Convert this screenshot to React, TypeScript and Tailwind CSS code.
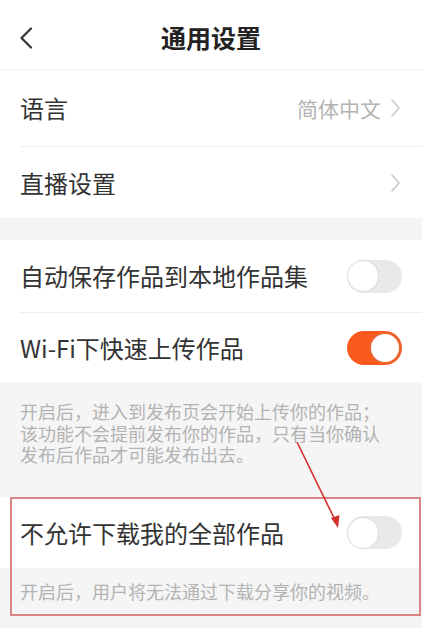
import React from "react"

const font = { fontFamily: '"Noto Sans CJK SC", "Noto Sans", sans-serif' }

function Chevron({ className = "" }: { className?: string }) {
  return (
    <svg width="9" height="18" viewBox="0 0 9 18" className={className}>
      <path d="M1 1 L8 9 L1 17" fill="none" stroke="#c4c4c4" strokeWidth="1.4" strokeLinecap="round" strokeLinejoin="round" />
    </svg>
  )
}

function Toggle({ on }: { on: boolean }) {
  return on ? (
    <div className="w-[55px] h-[34px] rounded-full bg-[#fb5a1f] flex items-center justify-end pr-[1px]">
      <div className="w-[32px] h-[32px] rounded-full bg-white border-2 border-[#e9672f]" />
    </div>
  ) : (
    <div className="w-[55px] h-[33px] rounded-full bg-[#e9e9e9] flex items-center">
      <div className="w-[32px] h-[32px] rounded-full bg-white border border-[#e2e2e2] shadow-[0_0_1px_rgba(0,0,0,0.08)]" />
    </div>
  )
}

export default function App() {
  return (
    <div className="w-[422px] h-[628px] overflow-hidden bg-[#f5f5f5] relative text-[#333]" style={font}>
      {/* header */}
      <div className="h-[70px] bg-white border-b border-[#f0f0f0] relative flex items-center justify-center">
        <svg width="14" height="22" viewBox="0 0 14 22" className="absolute left-[19px] top-[27px]">
          <path d="M12 1.5 L2.5 11 L12 20.5" fill="none" stroke="#333" strokeWidth="2.2" strokeLinecap="round" strokeLinejoin="round" />
        </svg>
        <h1 className="text-[25px] font-bold text-[#222] leading-none mt-[6px]">通用设置</h1>
      </div>

      {/* language / live */}
      <div className="bg-white">
        <div className="h-[76px] flex items-center justify-between pl-[20px] pr-[22px]">
          <span className="text-[24px] leading-none">语言</span>
          <div className="flex items-center gap-[10px]">
            <span className="text-[21px] leading-none text-[#b4b4b4]">简体中文</span>
            <Chevron />
          </div>
        </div>
        <div className="ml-[20px] h-px bg-[#efefef]" />
        <div className="h-[71px] flex items-center justify-between pl-[20px] pr-[22px]">
          <span className="text-[24px] leading-none">直播设置</span>
          <Chevron />
        </div>
      </div>

      <div className="h-[22px]" />

      {/* toggles */}
      <div className="bg-white">
        <div className="h-[72px] flex items-center justify-between pl-[20px] pr-[20px]">
          <span className="text-[24px] leading-none">自动保存作品到本地作品集</span>
          <Toggle on={false} />
        </div>
        <div className="ml-[20px] h-px bg-[#efefef]" />
        <div className="h-[69px] flex items-center justify-between pl-[20px] pr-[20px]">
          <span className="text-[24px] leading-none">Wi-Fi下快速上传作品</span>
          <Toggle on />
        </div>
      </div>

      <div className="h-[115px] pl-[20px] pr-[10px] pt-[19px]">
        <p className="text-[18px] leading-[21.7px] text-[#b3b3b3]">
          开启后，进入到发布页会开始上传你的作品；
          <br />
          该功能不会提前发布你的作品，只有当你确认
          <br />
          发布后作品才可能发布出去。
        </p>
      </div>

      <div className="bg-white h-[71px] flex items-center justify-between pl-[20px] pr-[20px]">
        <span className="text-[24px] leading-none">不允许下载我的全部作品</span>
        <Toggle on={false} />
      </div>
      <div className="h-[47px] pl-[20px] pt-[13px]">
        <p className="text-[18px] leading-[21.7px] text-[#b3b3b3]">开启后，用户将无法通过下载分享你的视频。</p>
      </div>

      {/* annotation */}
      <div className="absolute left-[10px] top-[497px] w-[411px] h-[119px] border-2 border-[#d98585]" />
      <svg width="422" height="628" className="absolute left-0 top-0 pointer-events-none">
        <line x1="297" y1="442" x2="336" y2="522" stroke="#d3302c" strokeWidth="1.6" />
        <path d="M331 518 L338 528 L339.5 515 Z" fill="#d3302c" />
      </svg>
    </div>
  )
}
